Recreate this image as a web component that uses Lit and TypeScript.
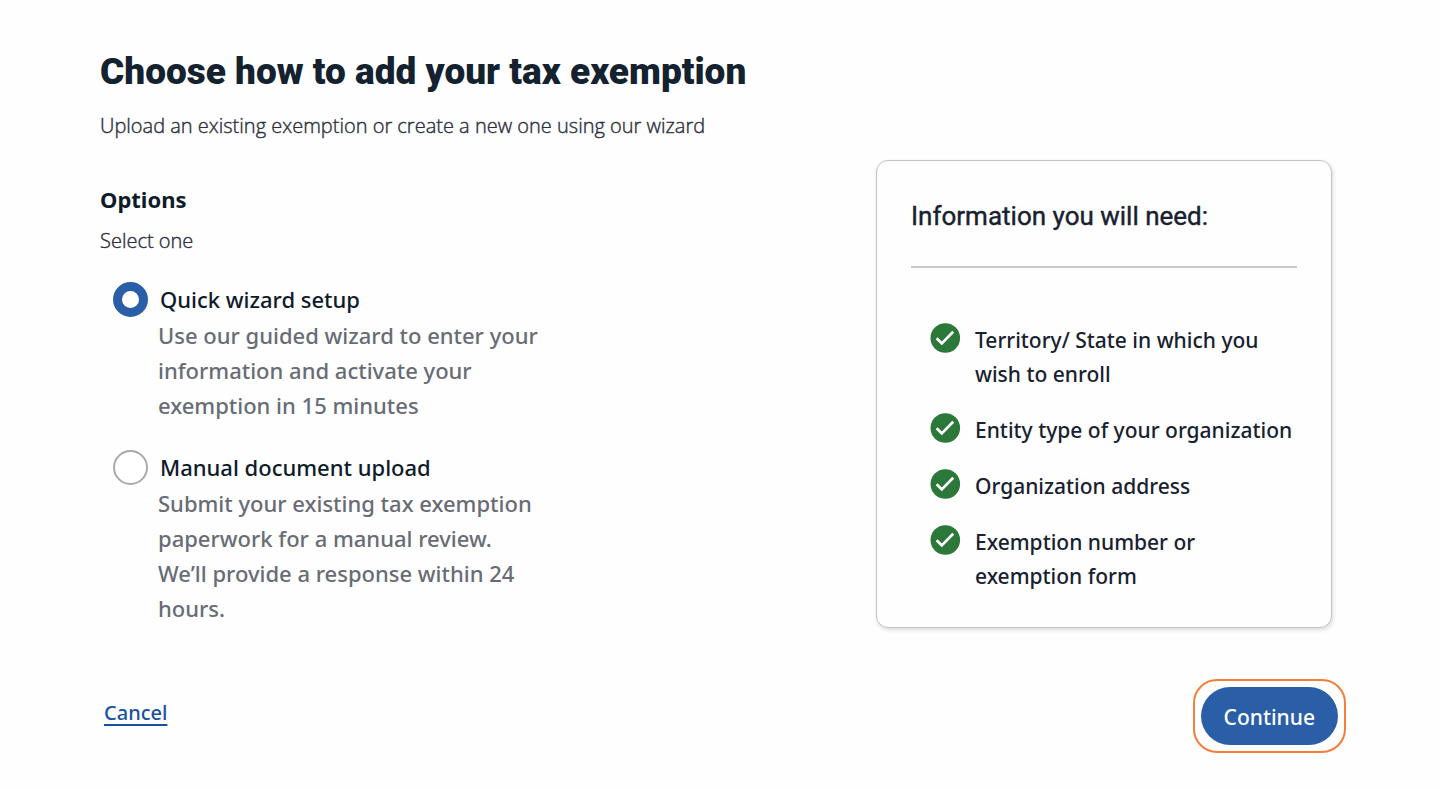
import { LitElement, html, css } from "lit";
import { customElement, property, state } from "lit/decorators.js";

interface Option {
  id: string;
  label: string;
  description: string;
}

const OPTIONS: Option[] = [
  {
    id: "wizard",
    label: "Quick wizard setup",
    description:
      "Use our guided wizard to enter your information and activate your exemption in 15 minutes",
  },
  {
    id: "manual",
    label: "Manual document upload",
    description:
      "Submit your existing tax exemption paperwork for a manual review. We’ll provide a response within 24 hours.",
  },
];

const REQUIREMENTS = [
  "Territory/ State in which you wish to enroll",
  "Entity type of your organization",
  "Organization address",
  "Exemption number or exemption form",
];

/** Card listing what the customer should have at hand. */
@customElement("info-card")
export class InfoCard extends LitElement {
  @property({ attribute: false }) items: string[] = [];

  static styles = css`
    :host {
      display: block;
      box-sizing: border-box;
      padding: 34px;
      background: #fefefe;
      border: 1px solid #c2c3c9;
      border-radius: 12px;
      box-shadow: 1px 2px 4px rgba(0, 0, 0, 0.14);
      color: #18212f;
    }
    .title {
      margin: 0;
      padding-bottom: 29px;
      border-bottom: 2px solid #c8c7d3;
      font: 400 26px/42px Roboto, sans-serif;
      -webkit-text-stroke: 0.4px currentColor;
    }
    .list {
      display: grid;
      gap: 22px;
      margin: 0;
      padding: 55px 0 0 18px;
      list-style: none;
    }
    .item {
      display: flex;
      gap: 14px;
      font-size: 21px;
      font-weight: 500;
      line-height: 34px;
    }
    .item span {
      max-width: 320px;
      margin-right: -16px;
    }
    .tick {
      flex: none;
      width: 32px;
      height: 32px;
    }
  `;

  render() {
    return html`
      <h2 class="title">Information you will need:</h2>
      <ul class="list">
        ${this.items.map(
          (item) => html`
            <li class="item">
              <svg class="tick" viewBox="0 0 32 32" aria-hidden="true">
                <circle cx="16.3" cy="15" r="14.8" fill="#2b7838" />
                <path
                  d="M7.6 15.2 L12.8 20.4 L24.2 8.8"
                  fill="none"
                  stroke="#fff"
                  stroke-width="2.7"
                />
              </svg>
              <span>${item}</span>
            </li>
          `,
        )}
      </ul>
    `;
  }
}

@customElement("app-root")
export class AppRoot extends LitElement {
  @state() private selected = "wizard";

  static styles = css`
    :host {
      display: block;
      box-sizing: border-box;
      min-height: 100vh;
      padding: 48px 108px 36px 100px;
      background: #fefefe;
      color: #0f1b2a;
      font-family: "Noto Sans", "Open Sans", sans-serif;
    }
    .title {
      margin: 0;
      color: #14212f;
      font: 900 37px/48px Roboto, sans-serif;
    }
    .subtitle {
      margin: 16px 0 0;
      color: #2c303b;
      font: 300 20px/28px "Open Sans", sans-serif;
      -webkit-text-stroke: 0.4px currentColor;
    }
    .body {
      display: flex;
      flex-wrap: wrap;
      align-items: flex-start;
      justify-content: space-between;
      gap: 32px;
      margin-top: 20px;
    }
    .options {
      flex: 0 1 460px;
      min-width: 0;
      margin: 0;
      padding: 23px 0 0;
      border: 0;
    }
    .legend {
      float: left;
      width: 100%;
      padding: 0;
      font-size: 22px;
      font-weight: 700;
      line-height: 32px;
    }
    .hint {
      clear: both;
      margin: 0;
      padding-top: 12px;
      color: #2c303b;
      font: 300 20px/28px "Open Sans", sans-serif;
      -webkit-text-stroke: 0.4px currentColor;
    }
    .option {
      display: grid;
      grid-template-columns: 35px minmax(0, 1fr);
      column-gap: 12px;
      align-items: center;
      margin-top: 26px;
      padding-left: 13px;
      font-size: 22px;
      font-weight: 500;
    }
    .radio {
      appearance: none;
      box-sizing: border-box;
      width: 35px;
      height: 35px;
      margin: 0;
      background: #fff;
      border: 2px solid #a9a9ab;
      border-radius: 50%;
      cursor: pointer;
    }
    .radio:checked {
      border: 9px solid #2a5ea7;
    }
    .label {
      line-height: 36px;
      cursor: pointer;
    }
    .description {
      grid-column: 2;
      max-width: 384px;
      margin: 1px 0 0 -2px;
      color: #686c75;
      line-height: 35px;
    }
    .card {
      flex: 0 1 456px;
    }
    .actions {
      display: flex;
      align-items: flex-start;
      justify-content: space-between;
      margin: 51px -14px 0 4px;
    }
    .cancel {
      padding-top: 20px;
      color: #17519f;
      font-size: 20px;
      font-weight: 500;
      line-height: 28px;
      text-decoration: underline;
      text-decoration-thickness: 2px;
      text-underline-offset: 4px;
    }
    .continue-ring {
      padding: 6px;
      border: 2px solid #f47d3c;
      border-radius: 24px;
    }
    .continue {
      display: block;
      padding: 2px 23px 0;
      background: #2a5ea7;
      border: 0;
      border-radius: 29px;
      color: #fff;
      cursor: pointer;
      font: 500 21px/56px "Noto Sans", sans-serif;
    }
  `;

  render() {
    return html`
      <main>
        <h1 class="title">Choose how to add your tax exemption</h1>
        <p class="subtitle">
          Upload an existing exemption or create a new one using our wizard
        </p>
        <div class="body">
          <fieldset class="options">
            <legend class="legend">Options</legend>
            <p class="hint">Select one</p>
            ${OPTIONS.map(
              (option) => html`
                <div class="option">
                  <input
                    class="radio"
                    type="radio"
                    name="method"
                    id=${option.id}
                    aria-describedby="${option.id}-description"
                    .checked=${this.selected === option.id}
                    @change=${() => (this.selected = option.id)}
                  />
                  <label class="label" for=${option.id}>${option.label}</label>
                  <p class="description" id="${option.id}-description">
                    ${option.description}
                  </p>
                </div>
              `,
            )}
          </fieldset>
          <info-card class="card" .items=${REQUIREMENTS}></info-card>
        </div>
        <div class="actions">
          <a class="cancel" href="#">Cancel</a>
          <div class="continue-ring">
            <button class="continue" type="button">Continue</button>
          </div>
        </div>
      </main>
    `;
  }
}
